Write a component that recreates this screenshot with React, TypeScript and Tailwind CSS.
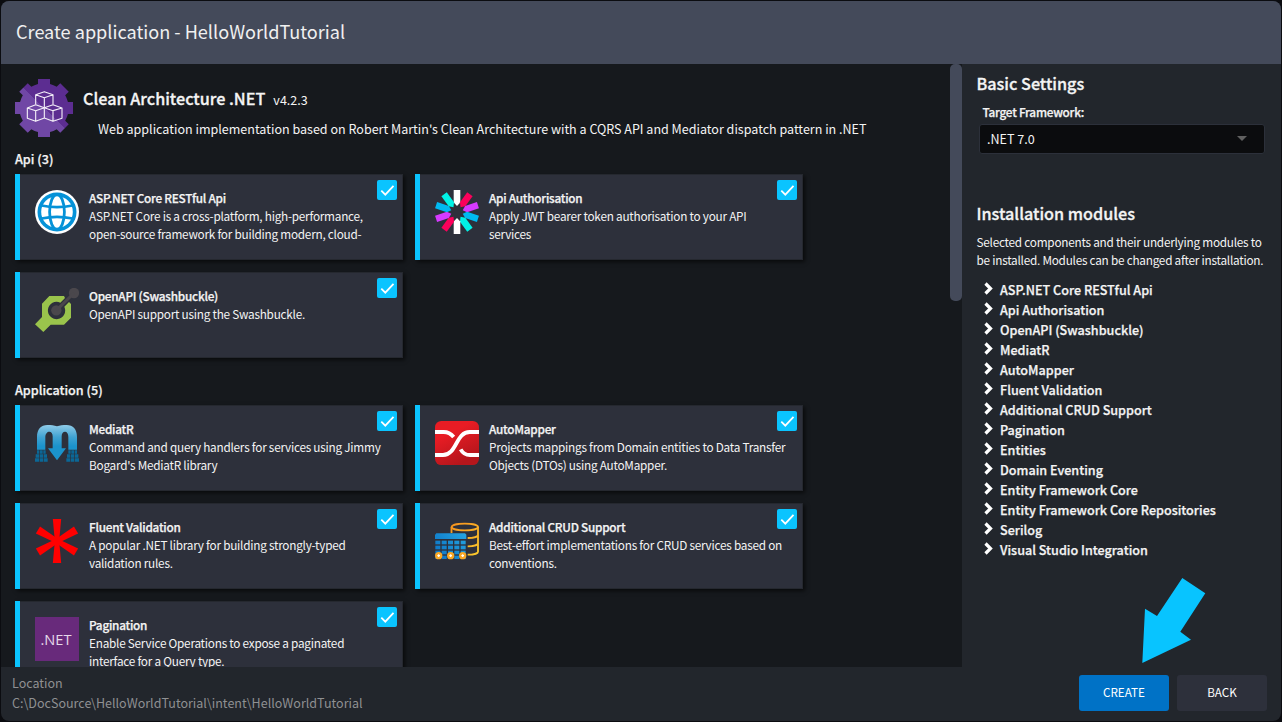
import type { ReactNode } from "react";

function GearIcon() {
  const teeth = [0, 45, 90, 135, 180, 225, 270, 315];
  return (
    <svg viewBox="45 57 174 174" className="size-[58px] shrink-0">
      <defs>
        <linearGradient id="gear" gradientUnits="userSpaceOnUse" x1="160" y1="115" x2="104" y2="173">
          <stop offset="0.5" stopColor="#5c2d91" />
          <stop offset="0.5" stopColor="#7047a5" />
        </linearGradient>
        <clipPath id="gear-clip">
          <circle cx="132" cy="144" r="74" />
          {teeth.map((a) => (
            <path key={a} d="M114 57h36v16l5 8h-46l5-8z" transform={`rotate(${a} 132 144)`} />
          ))}
        </clipPath>
      </defs>
      <rect x="45" y="57" width="174" height="174" fill="url(#gear)" clipPath="url(#gear-clip)" />
      <g fill="none" stroke="#f3eef8" strokeWidth="3.400" strokeLinejoin="round">
        <path d="M107 104l26-9 26 9-26 9zM107 104v29M159 104v29M133 113v30" />
        <path d="M82 144l25-10 26 9-26 9zM82 144v31l25 9v-32M107 184l26-10v-31" />
        <path d="M186 144l-27-10-26 9 26 9zM186 144v31l-27 9v-32M159 184l-26-10" />
      </g>
    </svg>
  );
}

function GlobeIcon() {
  return (
    <svg viewBox="-22 -22 44 44" className="size-11">
      <circle r="22" fill="#fff" />
      <circle r="19.5" fill="#0592d8" />
      <circle r="15.8" fill="#fff" />
      <g fill="none" stroke="#0592d8" strokeWidth="2.8">
        <ellipse rx="7.4" ry="17.5" />
        <path d="M-15.5-6.5Q0-3.3 15.5-6.5M-15.5 6.5Q0 3.3 15.5 6.5" />
      </g>
    </svg>
  );
}

function TokenIcon() {
  const colors = ["#ffffff", "#fb015b", "#d63aff", "#00b9f1", "#00f2e6"];
  return (
    <svg viewBox="-22 -22 44 44" className="size-11">
      {Array.from({ length: 10 }, (_, i) => (
        <path key={i} d="M-3.3-22h6.6v12.4L0-6l-3.3-3.6z" fill={colors[i % 5]} transform={`rotate(${i * 36})`} />
      ))}
    </svg>
  );
}

function OpenApiIcon() {
  return (
    <svg viewBox="105 369 132 132" className="size-11">
      <path
        fillRule="evenodd"
        fill="#9ac44c"
        d="M148 393h44l3 6-14 14a26 26 0 1 0 12 12l14-14 6 6v41l-21 21h-40l-22 22-25-23 21-22v-40z"
      />
      <g fill="#4a474c">
        <circle cx="169" cy="436" r="15.500" />
        <circle cx="222" cy="384" r="15.500" />
        <path d="M169 436l53-52" stroke="#4a474c" strokeWidth="9" />
      </g>
    </svg>
  );
}

function MediatorIcon() {
  return (
    <svg viewBox="105 123 132 132" className="size-11">
      <defs>
        <linearGradient id="mediator" x1="0" y1="0" x2="0" y2="1">
          <stop offset="0" stopColor="#8fcbe8" />
          <stop offset="0.35" stopColor="#3fa2d2" />
          <stop offset="0.6" stopColor="#1b93cc" />
        </linearGradient>
      </defs>
      <path
        fill="url(#mediator)"
        d="M111 209v-38c0-23 12-36 31-36 11 0 21 1 29 4 8-3 18-4 29-4 19 0 31 13 31 36v38h-26v-38c0-10-4-16-10-16-6 0-10 5-10 14v36h13l-27 36-27-36h14v-36c0-9-4-14-10-14-6 0-12 6-12 16v38z"
      />
      <path
        fill="#0b6796"
        d="M111 211h7v10h-7zM120 211h8v10h-8zM130 211h7v10h-7zM107 223h10v10h-10zM119 223h10v10h-10zM131 223h10v10h-10zM105 235h12v10h-12zM119 235h11v10h-11zM132 235h11v10h-11zM205 211h7v10h-7zM214 211h8v10h-8zM224 211h7v10h-7zM201 223h10v10h-10zM213 223h10v10h-10zM225 223h10v10h-10zM199 235h11v10h-11zM212 235h11v10h-11zM225 235h12v10h-12z"
      />
    </svg>
  );
}

function MapperIcon() {
  return (
    <svg viewBox="90 63 132 132" className="size-11">
      <defs>
        <linearGradient id="mapper" x1="0" y1="0" x2="0.5" y2="1">
          <stop offset="0.35" stopColor="#e81c24" />
          <stop offset="1" stopColor="#b4161c" />
        </linearGradient>
      </defs>
      <rect x="90" y="63" width="132" height="132" rx="19" fill="url(#mapper)" />
      <g fill="none" stroke="#fff" strokeWidth="11.500">
        <path d="M90 96h26c14 0 22 5 30 15" />
        <path d="M90 165h24c42 0 38-69 80-69h28" />
        <path d="M167 148c6 11 14 17 28 17h27" />
      </g>
    </svg>
  );
}

function AsteriskIcon() {
  return (
    <svg viewBox="-66 -66 132 132" className="size-11">
      {[0, 60, 120, 180, 240, 300].map((a) => (
        <path key={a} d="M-12.500-66h25L6.500 0h-13z" fill="#fe0000" transform={`rotate(${a})`} />
      ))}
    </svg>
  );
}

function CrudIcon() {
  const columns = [91, 110, 129, 148, 167];
  const rows = [422, 437, 452, 467];
  return (
    <svg viewBox="90 357 132 132" className="size-11">
      <defs>
        <linearGradient id="cylinder" gradientUnits="userSpaceOnUse" x1="140" y1="370" x2="220" y2="465">
          <stop offset="0" stopColor="#f7931e" />
          <stop offset="1" stopColor="#fdcb2c" />
        </linearGradient>
        <linearGradient id="table" gradientUnits="userSpaceOnUse" x1="90" y1="470" x2="184" y2="400">
          <stop offset="0" stopColor="#0a72c4" />
          <stop offset="1" stopColor="#25a5e2" />
        </linearGradient>
      </defs>
      <g fill="none" stroke="url(#cylinder)" strokeWidth="5.500">
        <ellipse cx="179.500" cy="381" rx="39.500" ry="10" />
        <path d="M139.500 381v18M219 381v74M188 414c17 0 31-4 31-9M188 439c17 0 31-4 31-9M188 464c17 0 31-4 31-9" />
      </g>
      <g fill="url(#table)">
        <path d="M94 400h86l4 4v13H90v-13z" />
        {rows.map((y) => columns.map((x) => <rect key={`${x}-${y}`} x={x} y={y} width="15" height={y === 467 ? 10 : 11} />))}
      </g>
      {[101, 137, 173].map((x) => (
        <g key={x}>
          <circle cx={x} cy="467" r="11" fill="#f9a825" />
          <path d={`M${x - 4} 467h8M${x} 463v8`} stroke="#fff" strokeWidth="3.500" />
        </g>
      ))}
    </svg>
  );
}

function DotNetIcon() {
  return (
    <div className="flex size-11 items-center justify-center bg-[#682a7b] pr-[2px] font-['Open_Sans',sans-serif] text-[14.600px] leading-none text-[#e6d9ea]">
      .NET
    </div>
  );
}

type Component = { name: string; text: string; icon: ReactNode };

const api: Component[] = [
  {
    name: "ASP.NET Core RESTful Api",
    text: "ASP.NET Core is a cross-platform, high-performance,\nopen-source framework for building modern, cloud-",
    icon: <GlobeIcon />,
  },
  { name: "Api Authorisation", text: "Apply JWT bearer token authorisation to your API\nservices", icon: <TokenIcon /> },
  { name: "OpenAPI (Swashbuckle)", text: "OpenAPI support using the Swashbuckle.", icon: <OpenApiIcon /> },
];

const application: Component[] = [
  {
    name: "MediatR",
    text: "Command and query handlers for services using Jimmy\nBogard's MediatR library",
    icon: <MediatorIcon />,
  },
  {
    name: "AutoMapper",
    text: "Projects mappings from Domain entities to Data Transfer\nObjects (DTOs) using AutoMapper.",
    icon: <MapperIcon />,
  },
  {
    name: "Fluent Validation",
    text: "A popular .NET library for building strongly-typed\nvalidation rules.",
    icon: <AsteriskIcon />,
  },
  {
    name: "Additional CRUD Support",
    text: "Best-effort implementations for CRUD services based on\nconventions.",
    icon: <CrudIcon />,
  },
  {
    name: "Pagination",
    text: "Enable Service Operations to expose a paginated\ninterface for a Query type.",
    icon: <DotNetIcon />,
  },
];

const modules = [
  "ASP.NET Core RESTful Api",
  "Api Authorisation",
  "OpenAPI (Swashbuckle)",
  "MediatR",
  "AutoMapper",
  "Fluent Validation",
  "Additional CRUD Support",
  "Pagination",
  "Entities",
  "Domain Eventing",
  "Entity Framework Core",
  "Entity Framework Core Repositories",
  "Serilog",
  "Visual Studio Integration",
];

function Card({ name, text, icon }: Component) {
  return (
    <div className="flex h-[86px] border-l-[5px] border-[#0ac4ff] bg-[#2d303b] shadow-[2px_2px_4px_rgba(0,0,0,0.6)]">
      <div className="flex min-w-0 flex-1 border-y border-r border-[#25282f] pl-[15px] pt-[14px]">
        <div className="mt-px size-11 shrink-0">{icon}</div>
        <div className="ml-[10px] min-w-0 flex-1 whitespace-pre text-[11.770px] leading-[18px] tracking-[-0.240px]">
          <div className="font-medium [-webkit-text-stroke:0.25px]">{name}</div>
          <div>{text}</div>
        </div>
        <div className="-mt-[9px] mr-[5px] flex size-5 shrink-0 items-center justify-center rounded-[2px] bg-[#0ac4ff]">
          <svg viewBox="0 0 20 20" className="size-5">
            <path d="M4.300 10.600l4 4 8.200-8.800" fill="none" stroke="#fff" strokeWidth="1.800" />
          </svg>
        </div>
      </div>
    </div>
  );
}

function Group({ title, items }: { title: string; items: Component[] }) {
  return (
    <section>
      <h3 className="h-5 text-[12.600px] font-medium leading-5 [-webkit-text-stroke:0.25px]">{title}</h3>
      <div className="mt-[5px] grid grid-cols-[388px_388px] gap-3">
        {items.map((item) => (
          <Card key={item.name} {...item} />
        ))}
      </div>
    </section>
  );
}

export default function App() {
  return (
    <div className="h-[722px] w-[1282px] overflow-hidden bg-[#0b0c10] p-px font-['Noto_Sans_CJK_SC',sans-serif] text-[#f4f4f4]">
      <div className="flex h-[720px] w-[1280px] flex-col overflow-hidden rounded-lg bg-[#22262c]">
        <header className="flex h-[63px] shrink-0 items-center bg-[#444a5a] pb-1 pl-[15px] text-[18.120px] leading-7 text-[#f0f0f0]">
          Create application - HelloWorldTutorial
        </header>
        <div className="flex h-[603px] shrink-0">
          <main className="flex h-[603px] w-[961px] overflow-hidden bg-[#16191d]">
            <div className="w-[949px] pl-[14px] pt-[15px]">
              <div className="flex h-[70px]">
                <GearIcon />
                <div className="ml-[10px]">
                  <div className="mt-[7px] flex h-6 items-baseline gap-2 leading-6">
                    <h2 className="text-[16.200px] font-medium [-webkit-text-stroke:0.3px]">Clean Architecture .NET</h2>
                    <span className="text-[12.550px]">v4.2.3</span>
                  </div>
                  <p className="ml-[15px] mt-[9px] whitespace-nowrap text-[12.540px] leading-5">
                    Web application implementation based on Robert Martin's Clean Architecture with a CQRS API and
                    Mediator dispatch pattern in .NET
                  </p>
                </div>
              </div>
              <div className="flex flex-col gap-[22px]">
                <Group title="Api (3)" items={api} />
                <Group title="Application (5)" items={application} />
              </div>
            </div>
            <div className="h-[237px] w-3 rounded-[5px] bg-[#444a5a]" />
          </main>
          <aside className="flex-1 pl-[14.500px] pt-[7px]">
            <h2 className="h-6 text-[16.200px] font-medium leading-6 [-webkit-text-stroke:0.3px]">Basic Settings</h2>
            <div className="ml-[6px] mt-2 h-[18px] text-[11.770px] font-medium leading-[18px] tracking-[-0.240px] [-webkit-text-stroke:0.25px]">
              Target Framework:
            </div>
            <div className="ml-[2.500px] mt-[3px] flex h-[30px] w-[286px] items-center justify-between rounded-[3px] border border-[#2c303a] bg-[#0b0c0e] pb-px pl-[7px] pr-[17px] text-[12.550px] leading-5">
              .NET 7.0
              <svg viewBox="0 0 10 5" className="h-[5px] w-[10px]">
                <path d="M0 0h10L5 5z" fill="#606060" />
              </svg>
            </div>
            <h2 className="mt-[47px] h-6 text-[16.200px] font-medium leading-6 [-webkit-text-stroke:0.3px]">
              Installation modules
            </h2>
            <p className="mt-2 whitespace-pre text-[11.770px] leading-[18px] tracking-[-0.240px]">
              {"Selected components and their underlying modules to\nbe installed. Modules can be changed after installation."}
            </p>
            <ul className="ml-[7.500px] mt-[11px]">
              {modules.map((name) => (
                <li
                  key={name}
                  className="flex h-5 text-[12.600px] font-medium leading-5 [-webkit-text-stroke:0.25px]"
                >
                  <svg viewBox="0 0 9 13" className="mr-[7px] mt-[2px] h-[13px] w-[9px]">
                    <path d="M1.500 1.500l5 5-5 5" fill="none" stroke="#fff" strokeWidth="3.200" />
                  </svg>
                  {name}
                </li>
              ))}
            </ul>
          </aside>
        </div>
        <footer className="flex flex-1 pl-[11px] pr-[14px]">
          <div className="flex-1 pt-[6px] text-[12.530px] leading-5 text-[#8f9092]">
            <div>Location</div>
            <div>C:\DocSource\HelloWorldTutorial\intent\HelloWorldTutorial</div>
          </div>
          <div className="mt-2 flex gap-2 text-[11.700px] leading-5 text-white">
            <button className="flex h-9 w-[90px] items-center justify-center rounded-[3px] bg-[#0072c6] pb-[2px]">
              CREATE
            </button>
            <button className="flex h-9 w-[90px] items-center justify-center rounded-[3px] bg-[#2d303b] pb-[2px]">
              BACK
            </button>
          </div>
        </footer>
      </div>
      <svg viewBox="0 0 64 86" className="absolute left-[1142px] top-[578px] h-[86px] w-[64px]">
        <path d="M.300 85L3 30.700 15 38 40.300 0l23 15.300-25 38.400L49 61.700z" fill="#08c4ff" />
      </svg>
    </div>
  );
}
